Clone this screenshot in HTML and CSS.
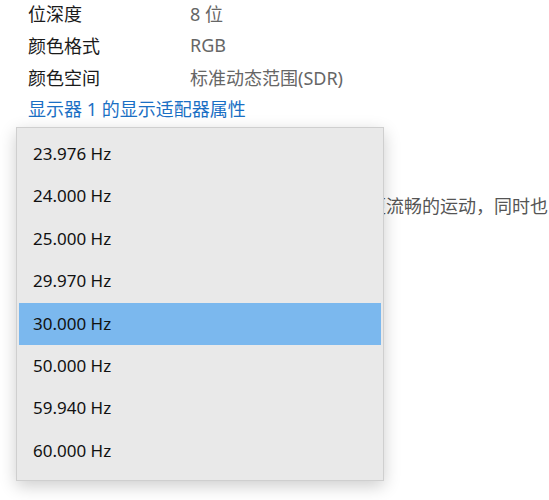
FILE: index.html
```html
<!DOCTYPE html>
<html lang="zh-CN">
<head>
  <meta charset="UTF-8">
  <title>显示器属性</title>
  <link rel="stylesheet" href="styles.css">
</head>
<body>
  <div class="info">
    <div class="row"><span class="label">位深度</span><span class="value">8 位</span></div>
    <div class="row"><span class="label">颜色格式</span><span class="value">RGB</span></div>
    <div class="row"><span class="label">颜色空间</span><span class="value">标准动态范围(SDR)</span></div>
    <a class="link" href="#">显示器 1 的显示适配器属性</a>
  </div>
  <p class="desc">选择刷新率。较高的刷新率可带来更流畅的运动，同时也</p>

  <ul class="menu" role="listbox">
    <li>23.976 Hz</li>
    <li>24.000 Hz</li>
    <li>25.000 Hz</li>
    <li>29.970 Hz</li>
    <li class="selected">30.000 Hz</li>
    <li>50.000 Hz</li>
    <li>59.940 Hz</li>
    <li>60.000 Hz</li>
  </ul>
</body>
</html>
```

FILE: styles.css
```css
* {
  margin: 0;
  padding: 0;
  box-sizing: border-box;
}
body {
  font-family: "Noto Sans", "Noto Sans CJK SC", sans-serif;
  background: #fff;
  color: #1a1a1a;
  overflow: hidden;
  position: relative;
  height: 500px;
}
.info {
  margin-top: -3px;
  padding-left: 28px;
}
.row {
  display: flex;
  height: 32px;
  align-items: center;
  font-size: 18px;
}
.label {
  width: 162px;
}
.value {
  color: #666;
}
.link {
  display: block;
  height: 32px;
  line-height: 32px;
  font-size: 18px;
  color: #1a6fc4;
  text-decoration: none;
}
.desc {
  margin: 67px 1px 0 28px;
  font-size: 18px;
  color: #555;
  white-space: nowrap;
  text-align: right;
}
.menu {
  position: absolute;
  top: 127px;
  left: 16px;
  width: 368px;
  list-style: none;
  background: #e9e9e9;
  border: 1px solid #cfcfcf;
  padding: 5px 2px 8px 2px;
  box-shadow: 0 5px 16px rgba(0, 0, 0, 0.2);
}
.menu li {
  height: 42.4px;
  line-height: 42.4px;
  padding-left: 14px;
  font-size: 17px;
  color: #111;
}
.menu li.selected {
  background: #7bb8ee;
}
```
